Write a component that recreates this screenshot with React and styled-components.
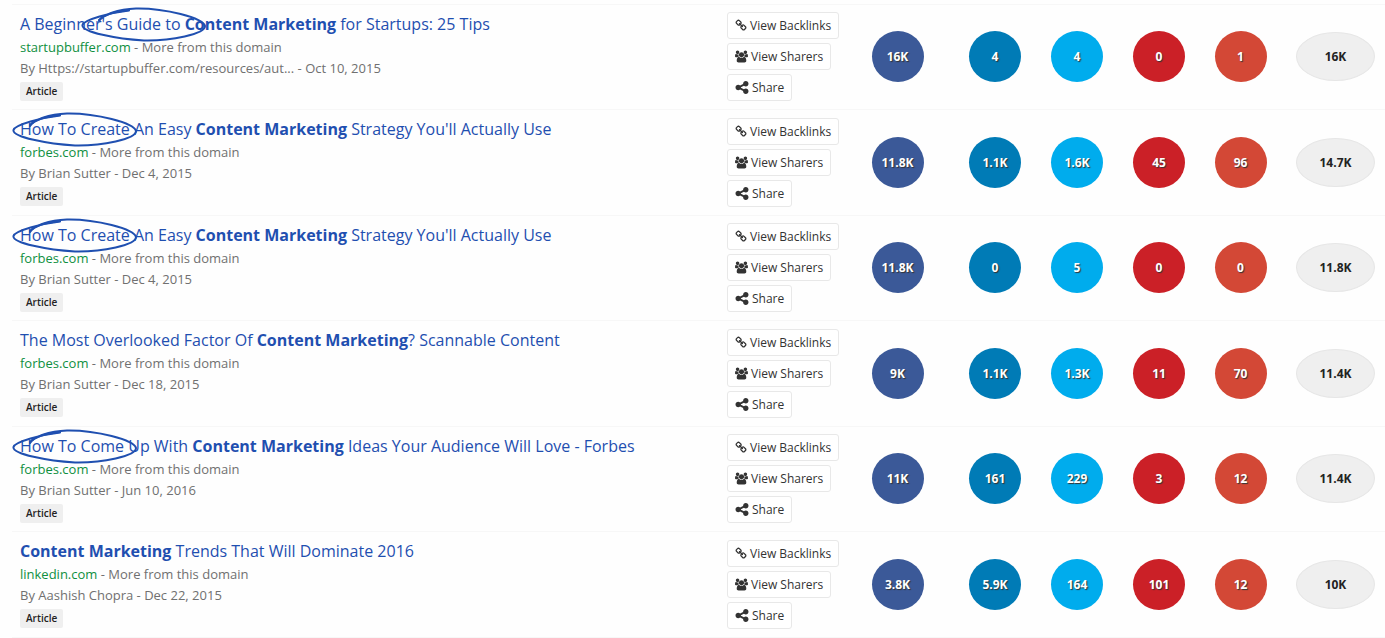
import React from 'react'
import styled, { createGlobalStyle, css } from 'styled-components'

const articles = [
  {
    before: "A Beginner's Guide to ",
    after: ' for Startups: 25 Tips',
    domain: 'startupbuffer.com',
    byline: 'By Https://startupbuffer.com/resources/aut... - Oct 10, 2015',
    mark: 61,
    counts: ['16K', '4', '4', '0', '1'],
    total: '16K',
  },
  {
    before: 'How To Create An Easy ',
    after: " Strategy You'll Actually Use",
    domain: 'forbes.com',
    byline: 'By Brian Sutter - Dec 4, 2015',
    mark: -8,
    counts: ['11.8K', '1.1K', '1.6K', '45', '96'],
    total: '14.7K',
  },
  {
    before: 'How To Create An Easy ',
    after: " Strategy You'll Actually Use",
    domain: 'forbes.com',
    byline: 'By Brian Sutter - Dec 4, 2015',
    mark: -8,
    counts: ['11.8K', '0', '5', '0', '0'],
    total: '11.8K',
  },
  {
    before: 'The Most Overlooked Factor Of ',
    after: '? Scannable Content',
    domain: 'forbes.com',
    byline: 'By Brian Sutter - Dec 18, 2015',
    counts: ['9K', '1.1K', '1.3K', '11', '70'],
    total: '11.4K',
  },
  {
    before: 'How To Come Up With ',
    after: ' Ideas Your Audience Will Love - Forbes',
    domain: 'forbes.com',
    byline: 'By Brian Sutter - Jun 10, 2016',
    mark: -8,
    counts: ['11K', '161', '229', '3', '12'],
    total: '11.4K',
  },
  {
    before: '',
    after: ' Trends That Will Dominate 2016',
    domain: 'linkedin.com',
    byline: 'By Aashish Chopra - Dec 22, 2015',
    counts: ['3.8K', '5.9K', '164', '101', '12'],
    total: '10K',
  },
]

// facebook, linkedin, twitter, pinterest, google plus
const colors = ['#3b5998', '#007bb6', '#00aced', '#cb2027', '#d34836']

function LinkIcon() {
  return (
    <Icon $width={12} viewBox="0 0 1792 1792" aria-hidden="true">
      <path d="M1520 1216q0-40-28-68l-208-208q-28-28-68-28-42 0-72 32 3 3 19 18.5t21.5 21.5 15 19 13 25.5 3.5 27.5q0 40-28 68t-68 28q-15 0-27.5-3.5t-25.5-13-19-15-21.5-21.5-18.5-19q-33 31-33 73 0 40 28 68l206 207q27 27 68 27 40 0 68-26l147-146q28-28 28-67zm-703-705q0-40-28-68l-206-207q-28-28-68-28-39 0-68 27l-147 146q-28 28-28 67 0 40 28 68l208 208q27 27 68 27 42 0 72-31-3-3-19-18.5t-21.5-21.5-15-19-13-25.5-3.5-27.5q0-40 28-68t68-28q15 0 27.5 3.5t25.5 13 19 15 21.5 21.5 18.5 19q33-31 33-73zm895 705q0 120-85 203l-147 146q-83 83-203 83-121 0-204-85l-206-207q-83-83-83-203 0-123 88-209l-88-88q-86 88-208 88-120 0-204-84l-208-208q-84-84-84-204t85-203l147-146q83-83 203-83 121 0 204 85l206 207q83 83 83 203 0 123-88 209l88 88q86-88 208-88 120 0 204 84l208 208q84 84 84 204z" />
    </Icon>
  )
}

function UsersIcon() {
  return (
    <Icon $width={13} viewBox="0 0 1920 1792" aria-hidden="true">
      <path d="M593 896q-162 5-265 128h-134q-82 0-138-40.500t-56-118.500q0-353 124-353 6 0 43.500 21t97.500 42.500 119 21.500q67 0 133-23-5 37-5 66 0 139 81 256zm1071 637q0 120-73 189.500t-194 69.500h-874q-121 0-194-69.500t-73-189.500q0-53 3.500-103.500t14-109 26.500-108.500 43-97.500 62-81 85.500-53.500 111.500-20q10 0 43 21.500t73 48 107 48 135 21.500 135-21.500 107-48 73-48 43-21.500q61 0 111.500 20t85.500 53.500 62 81 43 97.500 26.500 108.500 14 109 3.500 103.500zm-1024-1277q0 106-75 181t-181 75-181-75-75-181 75-181 181-75 181 75 75 181zm704 384q0 159-112.500 271.500t-271.500 112.500-271.500-112.500-112.500-271.500 112.500-271.500 271.500-112.500 271.500 112.500 112.500 271.500zm576 225q0 78-56 118.500t-138 40.500h-134q-103-123-265-128 81-117 81-256 0-29-5-66 66 23 133 23 59 0 119-21.500t97.500-42.500 43.500-21q124 0 124 353zm-128-609q0 106-75 181t-181 75-181-75-75-181 75-181 181-75 181 75 75 181z" />
    </Icon>
  )
}

function ShareIcon() {
  return (
    <Icon $width={14} viewBox="128 128 1536 1536" aria-hidden="true">
      <path d="M1344 1024q133 0 226.5 93.5t93.5 226.5-93.5 226.5-226.5 93.5-226.5-93.5-93.5-226.5q0-12 2-34l-360-180q-92 86-218 86-133 0-226.5-93.5t-93.5-226.5 93.5-226.5 226.5-93.5q126 0 218 86l360-180q-2-22-2-34 0-133 93.5-226.5t226.5-93.5 226.5 93.5 93.5 226.5-93.5 226.5-226.5 93.5q-126 0-218-86l-360 180q2 22 2 34t-2 34l360 180q92-86 218-86z" />
    </Icon>
  )
}

function PenCircle({ left }) {
  return (
    <Pen $left={left} viewBox="0 0 126 36" aria-hidden="true">
      <path d="M48 3.5C30 5.5 3 12.5 1.5 18C0 25 36 32 63 33.5C90 34 124 27 124 19C122 11 84 1 55 1.5C37 2 21 8 18 14" />
      <path d="M18 13C24 7 34 4.5 48 3" />
    </Pen>
  )
}

function ArticleRow({ article }) {
  return (
    <Row>
      <InfoCell>
        <Title>
          <TitleLink href="#">
            {article.before}<b>Content Marketing</b>{article.after}
          </TitleLink>
          {article.mark !== undefined && <PenCircle left={article.mark} />}
        </Title>
        <Meta>
          <Domain href="#">{article.domain}</Domain> - <More href="#">More from this domain</More>
        </Meta>
        <Meta>{article.byline}</Meta>
        <Tag>Article</Tag>
      </InfoCell>
      <Cell>
        <Actions>
          <Action type="button"><LinkIcon />View Backlinks</Action>
          <Action type="button"><UsersIcon />View Sharers</Action>
          <Action type="button"><ShareIcon />Share</Action>
        </Actions>
      </Cell>
      {article.counts.map((count, i) => (
        <Cell key={i}>
          <Count $color={colors[i]}>{count}</Count>
        </Cell>
      ))}
      <TotalCell>
        <Total>{article.total}</Total>
      </TotalCell>
    </Row>
  )
}

export default function App() {
  return (
    <Page>
      <GlobalStyle />
      <Results>
        <colgroup>
          <col />
          <Col $width={122} />
          <Col $width={113} />
          <Col $width={82} />
          <Col $width={82} />
          <Col $width={82} />
          <Col $width={81} />
          <Col $width={104} />
        </colgroup>
        <tbody>
          {articles.map((article, i) => (
            <ArticleRow key={i} article={article} />
          ))}
        </tbody>
      </Results>
    </Page>
  )
}

const GlobalStyle = createGlobalStyle`
  * {
    box-sizing: border-box;
  }

  body {
    margin: 0;
    background: #fefefe;
    color: #707070;
    font-family: "Open Sans", "Noto Sans", sans-serif;
    font-size: 13px;
  }
`

const Page = styled.main`
  padding: 4px 0 0 12px;
`

const Results = styled.table`
  width: 100%;
  table-layout: fixed;
  border-spacing: 0;
  border-bottom: 1px solid #f7f7f7;
`

const Col = styled.col`
  width: ${(props) => props.$width}px;
`

const Row = styled.tr`
  height: 105px;

  &:nth-child(even) {
    height: 106px;
  }
`

const Cell = styled.td`
  padding: 0 0 1px;
  vertical-align: middle;
  border-top: 1px solid #f7f7f7;
`

const InfoCell = styled(Cell)`
  padding: 6px 8px 0;
  vertical-align: top;
`

const TotalCell = styled(Cell)`
  padding: 0 10px 1px 15px;
`

const Title = styled.h3`
  position: relative;
  margin: 0;
  font-size: 16px;
  font-weight: 400;
  line-height: 26px;
`

const TitleLink = styled.a`
  color: #1f4fb0;
  text-decoration: none;

  b {
    font-weight: 700;
  }
`

const Pen = styled.svg`
  position: absolute;
  top: -4px;
  left: ${(props) => props.$left}px;
  width: 126px;
  height: 36px;
  fill: none;
  stroke: #1f4fb0;
  stroke-width: 2;
  stroke-linecap: round;
  pointer-events: none;
`

const Meta = styled.p`
  margin: 0;
  line-height: 21px;
`

const Domain = styled.a`
  color: #0f8f3f;
  text-decoration: none;
`

const More = styled.a`
  color: inherit;
  text-decoration: none;
`

const Tag = styled.div`
  width: fit-content;
  margin-top: 3px;
  padding: 0 6px;
  border-radius: 2px;
  background: #efefef;
  color: #222;
  font-size: 10px;
  font-weight: 600;
  line-height: 19px;
`

const Actions = styled.div`
  display: flex;
  flex-direction: column;
  align-items: flex-start;
  gap: 4px;
  padding-left: 8px;
`

const Action = styled.button`
  display: flex;
  align-items: center;
  gap: 3px;
  height: 27px;
  padding: 0 7px;
  border: 1px solid #e8e8e8;
  border-radius: 3px;
  background: #fff;
  color: #333;
  font-family: inherit;
  font-size: 12px;
  white-space: nowrap;
  cursor: pointer;
`

const Icon = styled.svg`
  width: ${(props) => props.$width}px;
  height: 13px;
  fill: currentColor;
`

const bubble = css`
  display: flex;
  align-items: center;
  justify-content: center;
  margin: 0 auto;
  border-radius: 50%;
  font-size: 12px;
  font-weight: 700;
`

const Count = styled.div`
  ${bubble}
  width: 52px;
  height: 51px;
  background: ${(props) => props.$color};
  color: #fff;
  text-shadow: 1px 1px 1px #333;
`

const Total = styled.div`
  ${bubble}
  height: 49px;
  border: 1px solid #e6e6e6;
  background: #efefef;
  color: #222;
`
